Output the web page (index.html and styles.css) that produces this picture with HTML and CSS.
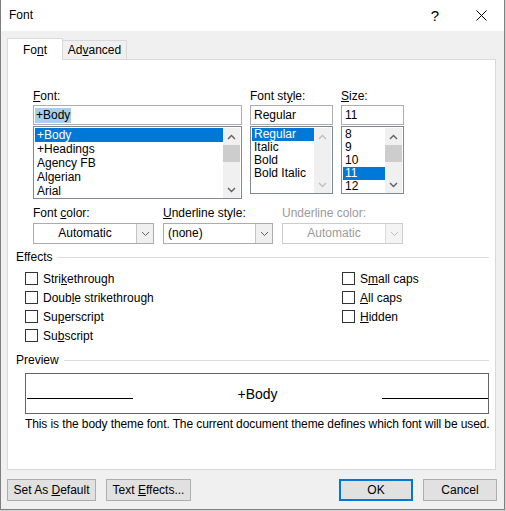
FILE: index.html
```html
<!DOCTYPE html>
<html>
<head>
<meta charset="utf-8">
<title>Font</title>
<link rel="stylesheet" href="styles.css">
</head>
<body>
<div class="window">
  <div class="titlebar">
    <span class="title">Font</span>
    <span class="help">?</span>
    <span class="close"><svg class="x" width="11" height="11" viewBox="0 0 11 11"><path d="M0.5 0.5L10.5 10.5M10.5 0.5L0.5 10.5"/></svg></span>
  </div>
  <div class="main">
    <div class="tabs">
      <div class="tab active">Fo<u>n</u>t</div>
      <div class="tab inactive">Ad<u>v</u>anced</div>
    </div>
    <div class="panel">
      <div class="fontrow">
        <div class="col">
          <div class="lbl"><u>F</u>ont:</div>
          <div class="input input-font"><span class="sel">+Body</span></div>
          <div class="list list-font">
            <div class="items">
              <div class="item on">+Body</div>
              <div class="item">+Headings</div>
              <div class="item">Agency FB</div>
              <div class="item">Algerian</div>
              <div class="item">Arial</div>
            </div>
            <div class="sb">
              <div class="sb-btn"><svg class="chev" width="9" height="6" viewBox="0 0 9 6"><path d="M1 5L4.5 1.5L8 5"/></svg></div>
              <div class="thumb"></div>
              <div class="track"></div>
              <div class="sb-btn"><svg class="chev" width="9" height="6" viewBox="0 0 9 6"><path d="M1 1L4.5 4.5L8 1"/></svg></div>
            </div>
          </div>
        </div>
        <div class="col">
          <div class="lbl">Font st<u>y</u>le:</div>
          <div class="input">Regular</div>
          <div class="list list-sm">
            <div class="items">
              <div class="item on">Regular</div>
              <div class="item">Italic</div>
              <div class="item">Bold</div>
              <div class="item">Bold Italic</div>
            </div>
            <div class="sb">
              <div class="sb-btn"><svg class="chev dis" width="9" height="6" viewBox="0 0 9 6"><path d="M1 5L4.5 1.5L8 5"/></svg></div>
              <div class="track"></div>
              <div class="sb-btn"><svg class="chev dis" width="9" height="6" viewBox="0 0 9 6"><path d="M1 1L4.5 4.5L8 1"/></svg></div>
            </div>
          </div>
        </div>
        <div class="col">
          <div class="lbl"><u>S</u>ize:</div>
          <div class="input">11</div>
          <div class="list list-sm">
            <div class="items">
              <div class="item">8</div>
              <div class="item">9</div>
              <div class="item">10</div>
              <div class="item on">11</div>
              <div class="item">12</div>
            </div>
            <div class="sb">
              <div class="sb-btn"><svg class="chev" width="9" height="6" viewBox="0 0 9 6"><path d="M1 5L4.5 1.5L8 5"/></svg></div>
              <div class="thumb"></div>
              <div class="track"></div>
              <div class="sb-btn"><svg class="chev" width="9" height="6" viewBox="0 0 9 6"><path d="M1 1L4.5 4.5L8 1"/></svg></div>
            </div>
          </div>
        </div>
      </div>

      <div class="colorrow">
        <div class="col">
          <div class="lbl">Font <u>c</u>olor:</div>
          <div class="combo">
            <div class="combo-text center">Automatic</div>
            <div class="combo-btn"><svg class="chev thin" width="9" height="6" viewBox="0 0 9 6"><path d="M1 1L4.5 4.5L8 1"/></svg></div>
          </div>
        </div>
        <div class="col">
          <div class="lbl"><u>U</u>nderline style:</div>
          <div class="combo">
            <div class="combo-text">(none)</div>
            <div class="combo-btn"><svg class="chev thin" width="9" height="6" viewBox="0 0 9 6"><path d="M1 1L4.5 4.5L8 1"/></svg></div>
          </div>
        </div>
        <div class="col">
          <div class="lbl disabled">Underline color:</div>
          <div class="combo combo-dis">
            <div class="combo-text center">Automatic</div>
            <div class="combo-btn"><svg class="chev thin dis" width="9" height="6" viewBox="0 0 9 6"><path d="M1 1L4.5 4.5L8 1"/></svg></div>
          </div>
        </div>
      </div>

      <div class="group">
        <div class="group-h">Effects</div>
        <div class="checks">
          <div class="cb"><span class="box"></span><span>Stri<u>k</u>ethrough</span></div>
          <div class="cb"><span class="box"></span><span>Doub<u>l</u>e strikethrough</span></div>
          <div class="cb"><span class="box"></span><span>Su<u>p</u>erscript</span></div>
          <div class="cb"><span class="box"></span><span>Su<u>b</u>script</span></div>
          <div class="cb"><span class="box"></span><span>S<u>m</u>all caps</span></div>
          <div class="cb"><span class="box"></span><span><u>A</u>ll caps</span></div>
          <div class="cb"><span class="box"></span><span><u>H</u>idden</span></div>
        </div>
      </div>

      <div class="group group-preview">
        <div class="group-h">Preview</div>
        <div class="preview">
          <div class="pline pline-left"></div>
          <div class="ptext">+Body</div>
          <div class="pline"></div>
        </div>
        <div class="desc">This is the body theme font. The current document theme defines which font will be used.</div>
      </div>
    </div>

    <div class="buttons">
      <div class="btn btn-setdef">Set As <u>D</u>efault</div>
      <div class="btn btn-effects">Text <u>E</u>ffects...</div>
      <div class="btn btn-ok">OK</div>
      <div class="btn btn-cancel">Cancel</div>
    </div>
  </div>
</div>
</body>
</html>
```

FILE: styles.css
```css
* { box-sizing: border-box; }

html, body {
  margin: 0;
  padding: 0;
}

body {
  background: #d4d4d4;
  font-family: "Liberation Sans", Arial, sans-serif;
  font-size: 12px;
  color: #000;
}

u { text-decoration: underline; text-underline-offset: 1px; }

.window {
  width: 505px;
  height: 510px;
  border: 1px solid #7f7f7f;
  border-top: none;
  background: #f0f0f0;
  display: flex;
  flex-direction: column;
}

.titlebar {
  height: 31px;
  flex: none;
  background: #fff;
  display: flex;
  align-items: center;
  padding-left: 8px;
}

.title {
  flex: 1;
  line-height: 15px;
}

.help {
  width: 46px;
  text-align: center;
  font-size: 15px;
  line-height: 18px;
}

.close {
  width: 46px;
  display: flex;
  justify-content: center;
}

.x path {
  fill: none;
  stroke: #000;
  stroke-width: 1;
}

.main {
  flex: 1;
  padding: 7px 7px 0 6px;
}

.tabs {
  display: flex;
  align-items: flex-end;
  height: 22px;
  margin-bottom: -1px;
  position: relative;
  z-index: 1;
}

.tab {
  border: 1px solid #d9d9d9;
  border-bottom: none;
  text-align: center;
  line-height: 15px;
}

.tab.active {
  width: 56px;
  height: 22px;
  background: #fff;
  padding-top: 4px;
  position: relative;
  z-index: 2;
}

.tab.inactive {
  width: 65px;
  height: 19px;
  margin-left: -1px;
  margin-bottom: 1px;
  background: #f0f0f0;
  padding-top: 2px;
}

.panel {
  width: 489px;
  height: 411px;
  background: #fff;
  border: 1px solid #d9d9d9;
  padding: 29px 6px 0 8px;
}

.fontrow {
  display: grid;
  grid-template-columns: 209px 83px 63px;
  column-gap: 8px;
  margin-left: 17px;
}

.lbl {
  height: 16px;
  line-height: 15px;
  white-space: nowrap;
}

.lbl.disabled { color: #9a9a9a; }

.input {
  height: 20px;
  border: 1px solid #abadb3;
  line-height: 16px;
  padding: 1px 3px;
  white-space: nowrap;
}

.input-font { padding-left: 1px; }

.sel {
  display: inline-block;
  background: #a6cef0;
  line-height: 15px;
  padding: 0 1px;
}

.list {
  margin-top: 1px;
  border: 1px solid #828790;
  padding: 1px 1px 0 1px;
  display: flex;
  overflow: hidden;
}

.list-font { height: 73px; }
.list-font .items { line-height: 14px; }

.list-sm { height: 68px; }
.list-sm .items { line-height: 13px; }

.items {
  flex: 1;
  overflow: hidden;
}

.item {
  padding-left: 2px;
  white-space: nowrap;
}

.item.on {
  background: #0078d7;
  color: #fff;
}

.sb {
  width: 17px;
  flex: none;
  background: #f0f0f0;
  display: flex;
  flex-direction: column;
}

.sb-btn {
  height: 17px;
  flex: none;
  display: flex;
  align-items: center;
  justify-content: center;
}

.thumb {
  height: 17px;
  flex: none;
  background: #cdcdcd;
}

.track { flex: 1; }

.chev path {
  fill: none;
  stroke: #606060;
  stroke-width: 1.4;
}

.chev.thin path { stroke-width: 1; }
.chev.dis path { stroke: #bfbfbf; }

.colorrow {
  display: grid;
  grid-template-columns: 121px 110px 121px;
  column-gap: 9px;
  margin: 7px 0 0 17px;
}

.colorrow .lbl { height: 17px; }

.combo {
  height: 21px;
  border: 1px solid #acacac;
  background: #fff;
  display: flex;
}

.combo-text {
  flex: 1;
  line-height: 19px;
  padding-left: 4px;
  white-space: nowrap;
}

.combo-text.center {
  text-align: center;
  padding-left: 0;
}

.combo-btn {
  width: 17px;
  border-left: 1px solid #c4c4c4;
  background: #f0f0f0;
  display: flex;
  align-items: center;
  justify-content: center;
}

.combo-dis { border-color: #cccccc; }
.combo-dis .combo-text { color: #9a9a9a; }
.combo-dis .combo-btn { border-left-color: #dadada; background: #f4f4f4; }

.group { margin-top: 6px; }
.group-preview { margin-top: 8px; }

.group-h {
  display: flex;
  align-items: center;
  height: 15px;
  line-height: 15px;
}

.group-h::after {
  content: "";
  flex: 1;
  height: 1px;
  background: #dcdcdc;
  margin-left: 5px;
}

.checks {
  display: grid;
  grid-template-columns: 317px 1fr;
  grid-template-rows: repeat(4, 19px);
  grid-auto-flow: column;
  margin: 4px 0 0 9px;
}

.cb {
  display: flex;
  align-items: center;
  gap: 5px;
  white-space: nowrap;
}

.box {
  width: 13px;
  height: 13px;
  border: 1px solid #333;
  background: #fff;
  flex: none;
}

.preview {
  margin: 5px 0 0 9px;
  width: 464px;
  height: 41px;
  border: 1px solid #646464;
  display: flex;
  align-items: center;
}

.pline {
  width: 106px;
  height: 1px;
  background: #000;
  margin-top: 10px;
  flex: none;
}

.pline-left { margin-left: 1px; }

.ptext {
  flex: 1;
  text-align: center;
  font-size: 14px;
  line-height: 18px;
}

.desc {
  margin: 3px 0 0 9px;
  line-height: 15px;
  white-space: nowrap;
  letter-spacing: -0.1px;
}

.buttons {
  display: flex;
  margin-top: 9px;
}

.btn {
  height: 22px;
  border: 1px solid #adadad;
  background: #e1e1e1;
  text-align: center;
  line-height: 20px;
  white-space: nowrap;
}

.btn-setdef { width: 89px; }
.btn-effects { width: 85px; margin-left: 10px; }

.btn-ok {
  width: 74px;
  margin-left: auto;
  border: 2px solid #0078d7;
  line-height: 18px;
}

.btn-cancel { width: 74px; margin-left: 10px; }
```
